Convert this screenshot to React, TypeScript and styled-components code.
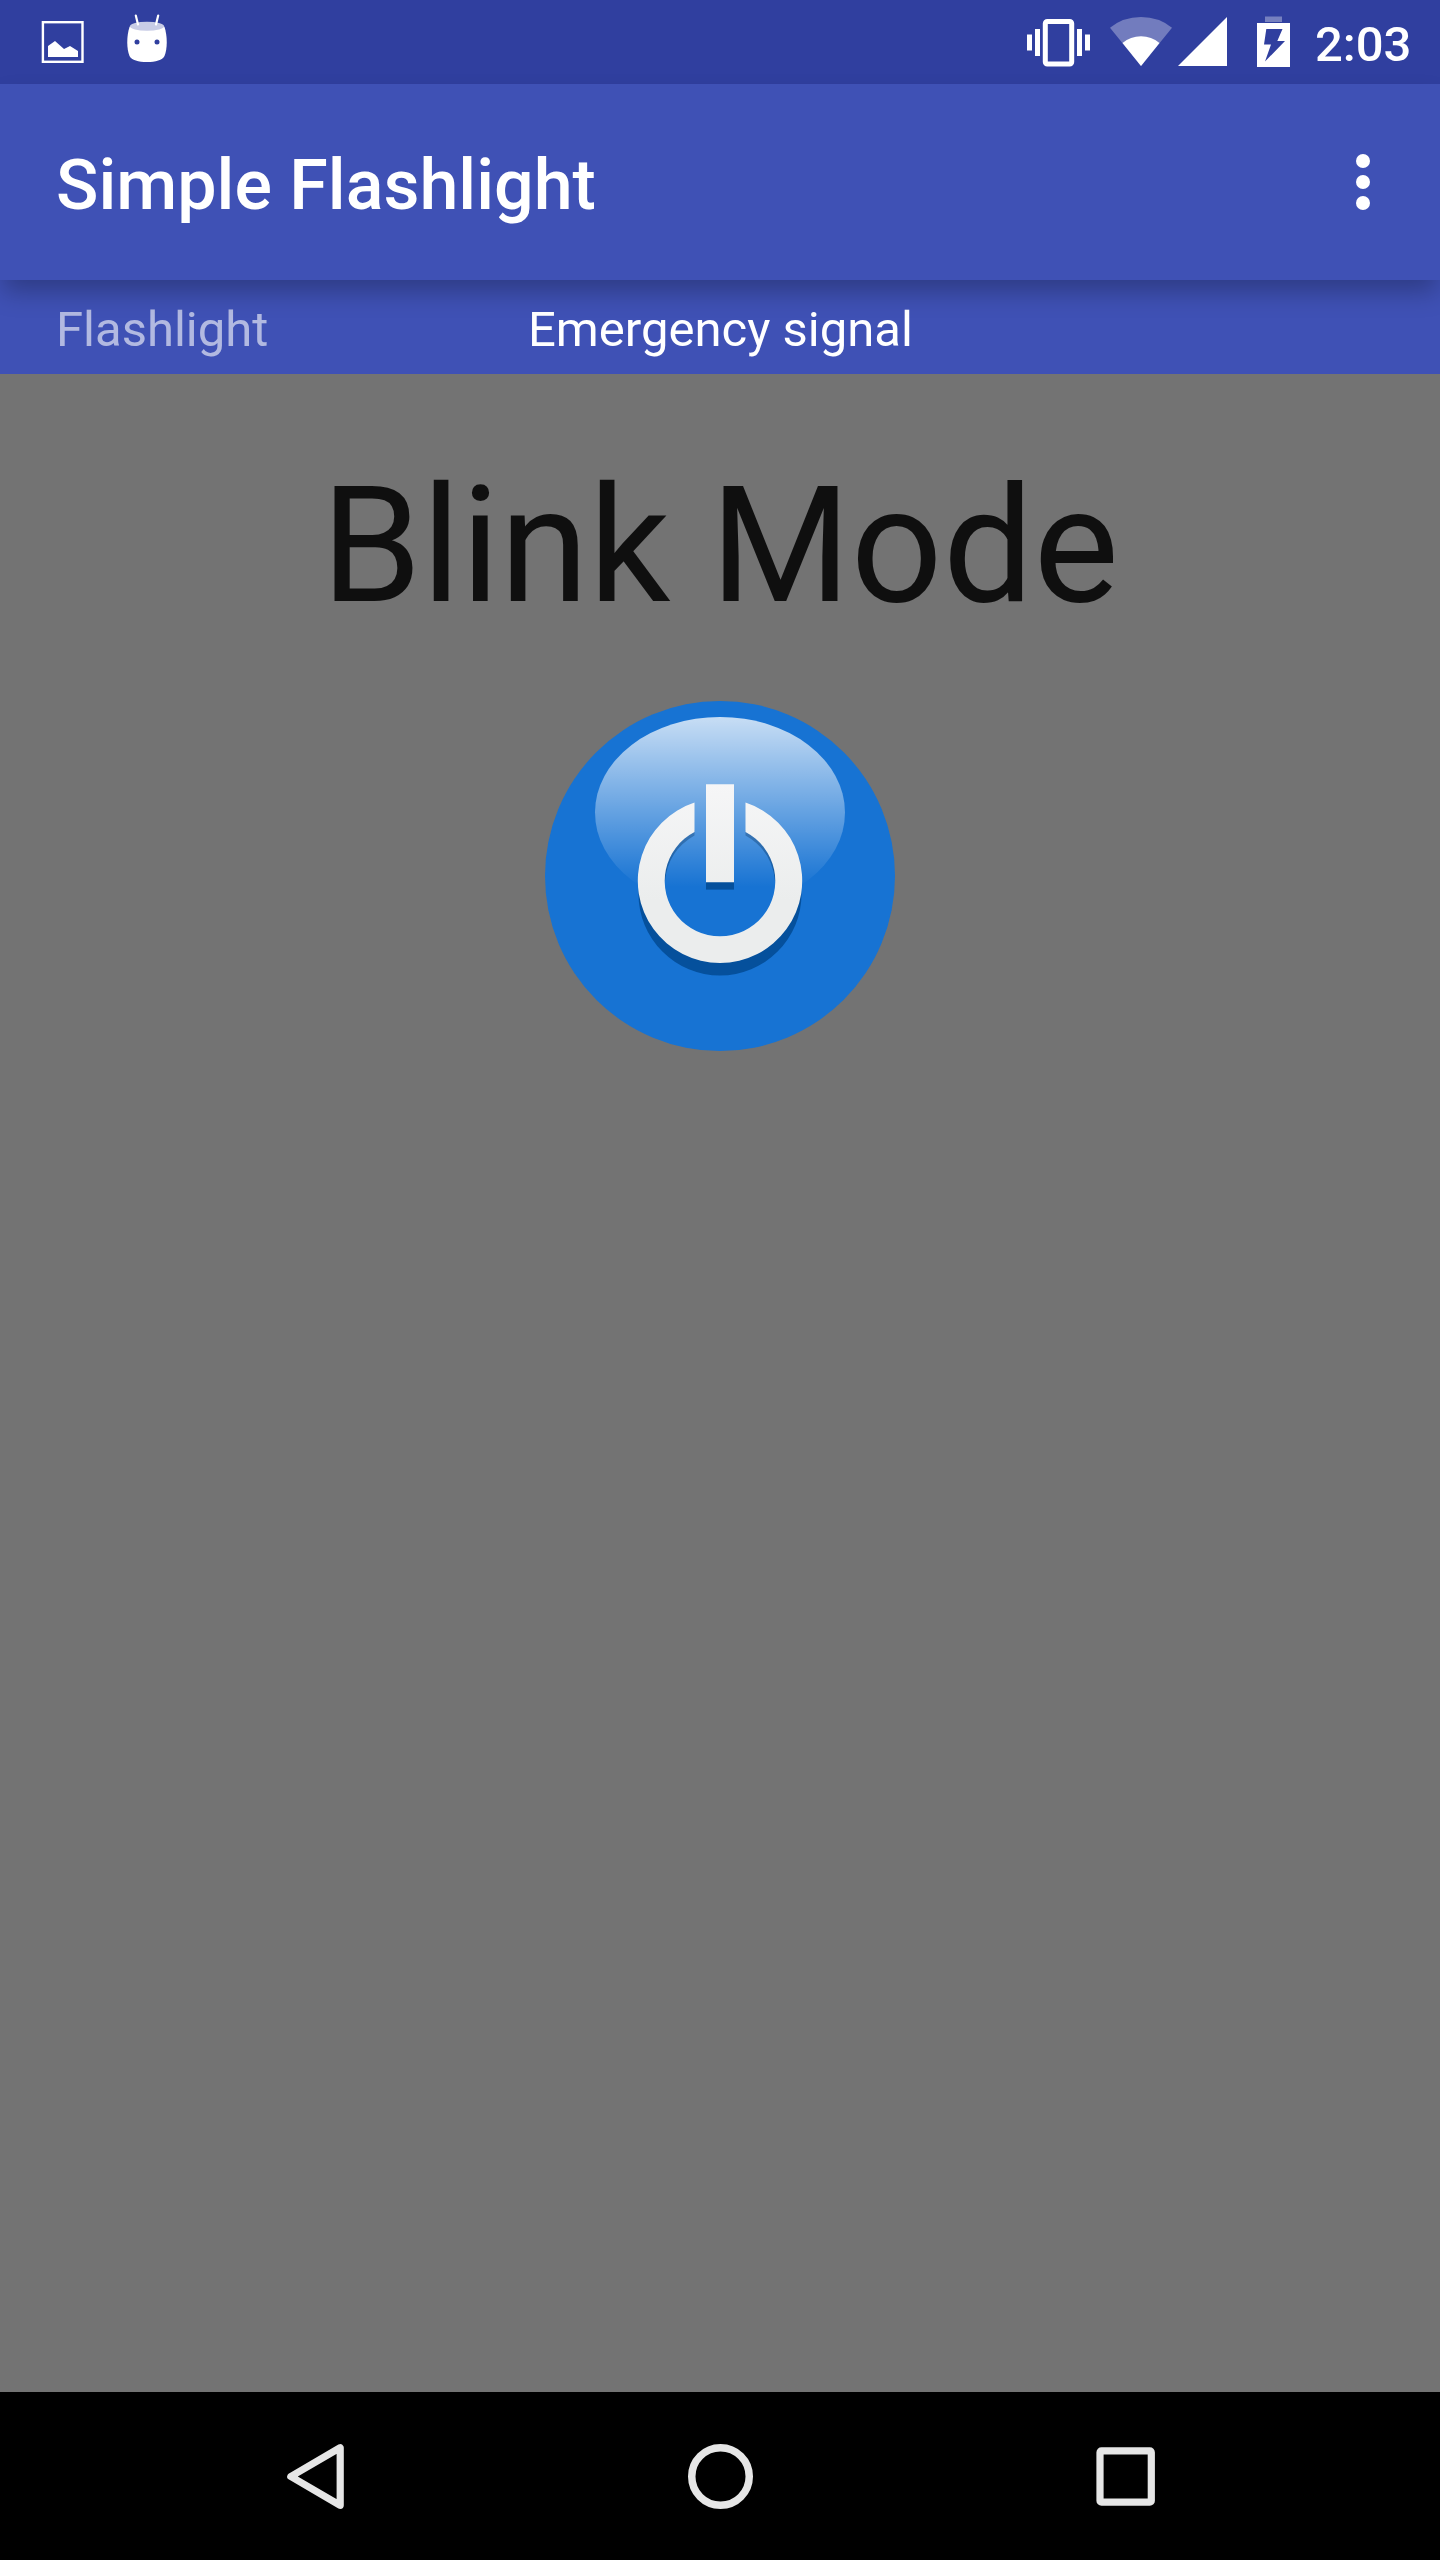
import React from "react";
import styled, { createGlobalStyle } from "styled-components";

const Global = createGlobalStyle`
  *, *::before, *::after { box-sizing: border-box; }
  html, body { margin: 0; padding: 0; background: #737373; }
  svg { display: block; }
`;

const Screen = styled.div`
  display: flex;
  flex-direction: column;
  width: 1440px;
  height: 2560px;
  overflow: hidden;
  background: #737373;
  font-family: Roboto, "Noto Sans", sans-serif;
`;

const StatusBar = styled.header`
  display: flex;
  justify-content: space-between;
  height: 84px;
  flex: none;
  padding-left: 40px;
  background: #303f9f;
  color: #fff;
`;

const StatusGroup = styled.div`
  display: flex;
`;

const Clock = styled.time`
  width: 125px;
  margin-left: 23px;
  padding-top: 16px;
  font-size: 49px;
  font-weight: 500;
  line-height: 57px;
  white-space: nowrap;
`;

const AppBar = styled.div`
  position: relative;
  z-index: 1;
  display: flex;
  align-items: center;
  justify-content: space-between;
  height: 196px;
  flex: none;
  padding: 0 42px 0 56px;
  background: #3f51b5;
  box-shadow: 0 14px 24px -3px rgba(0, 0, 0, 0.27);
  color: #fff;
`;

const Title = styled.h1`
  margin: 6px 0 0;
  font-size: 70px;
  font-weight: 500;
  line-height: 82px;
  white-space: nowrap;
`;

const IconButton = styled.button`
  padding: 0;
  border: 0;
  background: none;
  color: inherit;
`;

const TabStrip = styled.nav`
  display: flex;
  align-items: flex-start;
  height: 94px;
  flex: none;
  padding: 21px 56px 0;
  background: #3f51b5;
`;

const Tab = styled.span<{ $active?: boolean; $width?: number }>`
  width: ${(p) => (p.$width ? `${p.$width}px` : "auto")};
  color: ${(p) => (p.$active ? "#fff" : "rgba(255, 255, 255, 0.6)")};
  font-size: 49px;
  line-height: 57px;
  white-space: nowrap;
`;

const Content = styled.main`
  display: flex;
  flex: 1;
  flex-direction: column;
  align-items: center;
  padding-top: 78px;
`;

const Mode = styled.h2`
  margin: 0;
  color: #0f0f0f;
  font-size: 161px;
  font-weight: 400;
  line-height: 188px;
  white-space: nowrap;
`;

const PowerButton = styled(IconButton)`
  margin-top: 61px;
`;

const NavBar = styled.footer`
  display: flex;
  align-items: center;
  justify-content: center;
  gap: 305px;
  height: 168px;
  flex: none;
  background: #000;
`;

function NotificationIcons() {
  return (
    <svg width="140" height="84" viewBox="40 0 140 84">
      <rect x="42.9" y="22.2" width="39.6" height="39.6" fill="none" stroke="#fff" strokeWidth="2.4" />
      <path d="M48 57V46l7-5 9 8 6-3 8 5v6z" fill="#fff" />
      <path d="M129.500 27c4-5 31-5 35 0 3 9 3 22 0 29-2 4-9 6-17.500 6s-15.500-2-17.500-6c-3-7-3-20 0-29z" fill="#fff" />
      <ellipse cx="147" cy="26.300" rx="17" ry="4.500" fill="#c8cce6" />
      <path d="M135.800 15.500l2.200 9M158.200 15.500l-2.200 9" stroke="#fff" strokeWidth="2.200" strokeLinecap="round" />
      <circle cx="137" cy="42" r="2.500" fill="#303f9f" />
      <circle cx="157" cy="42" r="2.500" fill="#303f9f" />
    </svg>
  );
}

function SystemIcons() {
  return (
    <svg width="270" height="84" viewBox="1022 0 270 84" fill="#fff">
      <rect x="1045.300" y="21.500" width="26.400" height="42.500" rx="2" fill="none" stroke="#fff" strokeWidth="5" />
      <path d="M1027 34.500h5v16h-5zM1035 29h5v27h-5zM1077 29h5v27h-5zM1085 34.500h5v16h-5z" />
      <path d="M1110 27.800Q1123 17 1141 17T1172 27.800L1141 66z" opacity=".32" />
      <path d="M1122.500 43Q1130.500 36.300 1141 36.300T1159.500 43L1141 66z" />
      <path d="M1178 66h49V17z" />
      <path d="M1265 16.500h17V22h-17z" opacity=".34" />
      <path d="M1257 23h33v44h-33z" />
      <path d="M1266.300 29h16.200l-5.200 12h7.700l-20 20.500 6-17h-7z" fill="#303f9f" />
    </svg>
  );
}

function PowerIcon() {
  return (
    <svg width="350" height="350" viewBox="545 701 350 350">
      <defs>
        <linearGradient id="gloss" x1="0" y1="717" x2="0" y2="887" gradientUnits="userSpaceOnUse">
          <stop offset="0" stopColor="#fff" stopOpacity=".76" />
          <stop offset="1" stopColor="#fff" stopOpacity="0" />
        </linearGradient>
        <linearGradient id="metal" x1="0" y1="784" x2="0" y2="900" gradientUnits="userSpaceOnUse">
          <stop offset="0" stopColor="#f6f6f7" />
          <stop offset="1" stopColor="#ebeded" />
        </linearGradient>
        <linearGradient id="shade" x1="0" y1="825" x2="0" y2="890" gradientUnits="userSpaceOnUse">
          <stop offset="0" stopColor="#3f7ab8" />
          <stop offset="1" stopColor="#05509c" />
        </linearGradient>
      </defs>
      <circle cx="720" cy="876" r="175" fill="#1773d3" />
      <ellipse cx="720" cy="812.500" rx="125" ry="95.500" fill="url(#gloss)" />
      <path
        d="M638.500 894a81.500 81.500 0 0 0 163 0l-1-12h-15a65.500 65.500 0 0 1-131 0h-15z"
        fill="#05509c"
      />
      <path
        d="M694.500 830A55.300 55.300 0 0 0 664.200 881h.8Q668 850.500 694.500 835.500zM745.500 830A55.300 55.300 0 0 1 775.800 881h-.8Q772 850.500 745.500 835.500z"
        fill="url(#shade)"
      />
      <path d="M706 880h28v9.600h-28z" fill="#05509c" />
      <path d="M694.500 802.600V832A55.300 55.300 0 1 0 745.500 832V802.600A82.200 82.200 0 1 1 694.500 802.600z" fill="url(#metal)" />
      <path d="M706 784.300h28v98h-28z" fill="url(#metal)" />
    </svg>
  );
}

function App() {
  return (
    <>
      <Global />
      <Screen>
        <StatusBar>
          <StatusGroup>
            <NotificationIcons />
          </StatusGroup>
          <StatusGroup>
            <SystemIcons />
            <Clock>2:03</Clock>
          </StatusGroup>
        </StatusBar>
        <AppBar>
          <Title>Simple Flashlight</Title>
          <IconButton aria-label="More options">
            <svg width="70" height="70" viewBox="1328 147 70 70" fill="#fff">
              <circle cx="1363" cy="161" r="7" />
              <circle cx="1363" cy="182" r="7" />
              <circle cx="1363" cy="203" r="7" />
            </svg>
          </IconButton>
        </AppBar>
        <TabStrip>
          <Tab $width={472}>Flashlight</Tab>
          <Tab $active>Emergency signal</Tab>
        </TabStrip>
        <Content>
          <Mode>Blink Mode</Mode>
          <PowerButton aria-label="Toggle light">
            <PowerIcon />
          </PowerButton>
        </Content>
        <NavBar>
          <IconButton aria-label="Back">
            <svg width="100" height="100" viewBox="265 2426 100 100">
              <path d="M340.200 2447.700v57.600L290.800 2476.500z" fill="none" stroke="#e6e6e6" strokeWidth="7.200" strokeLinejoin="round" />
            </svg>
          </IconButton>
          <IconButton aria-label="Home">
            <svg width="100" height="100" viewBox="670 2426 100 100">
              <circle cx="720.500" cy="2476.500" r="28.750" fill="none" stroke="#e6e6e6" strokeWidth="7.500" />
            </svg>
          </IconButton>
          <IconButton aria-label="Recent apps">
            <svg width="100" height="100" viewBox="1075 2426 100 100">
              <rect x="1100" y="2450.900" width="51.300" height="51.300" rx="1.500" fill="none" stroke="#e6e6e6" strokeWidth="7.200" />
            </svg>
          </IconButton>
        </NavBar>
      </Screen>
    </>
  );
}

export default App;
